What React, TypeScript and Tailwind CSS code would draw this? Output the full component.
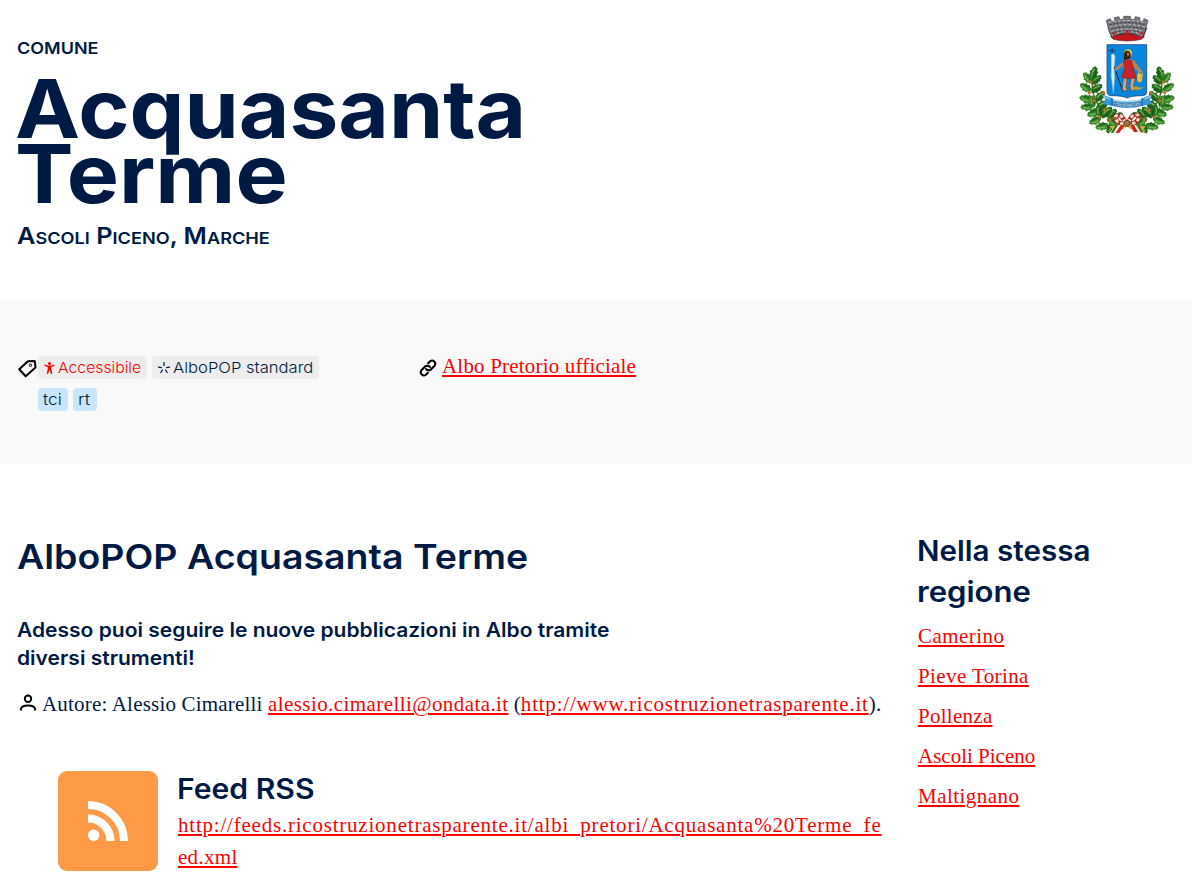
import React from "react";

const links: [string, string][] = [
  ["Camerino", "tracking-[0.44px]"],
  ["Pieve Torina", "tracking-[0.4px]"],
  ["Pollenza", "tracking-[0.27px]"],
  ["Ascoli Piceno", "tracking-normal"],
  ["Maltignano", "tracking-[0.47px]"],
];

// x, y, rotation, scale of each leaf on the left branch; the right branch mirrors it
const leaves: [number, number, number, number][] = [
  [66, 196, 8, 1.15], [48, 210, -45, 1.1], [74, 216, 40, 1], [42, 238, -65, 1.1], [74, 242, 50, 1.1],
  [44, 272, -85, 1.2], [84, 266, 35, 1.1], [46, 296, -100, 1.1], [92, 292, 50, 1.2], [66, 313, -120, 1.2],
  [104, 314, 40, 1.2], [70, 337, -120, 1.1], [122, 318, 30, 1], [90, 354, -110, 1.1], [112, 360, -165, 0.9],
  [62, 280, -20, 1], [82, 310, -15, 1.1], [122, 342, -60, 1.1],
];

function Branch() {
  return (
    <g>
      <path d="M62 205Q48 290 140 350" fill="none" stroke="#6b4a1c" strokeWidth="4" />
      {leaves.map(([x, y, r, s], i) => (
        <g key={i} transform={`translate(${x} ${y}) rotate(${r}) scale(${s})`}>
          <path d="M0 18l-7-4-1-5-4-3 2-6-2-5 6-4 0-5 7-5 7 6-1 5 4 4-3 5 2 6-5 3-1 5Z" fill={i % 2 ? "#35872b" : "#246c22"} />
          <path d="M-5 7Q-6-2 0-12" fill="none" stroke="#74b54c" strokeWidth="3.5" />
          <path d="M2 12Q5 2 4-8" fill="none" stroke="#174c18" strokeWidth="2.5" />
        </g>
      ))}
      {[[56, 222], [52, 254], [66, 278], [94, 254], [82, 326], [114, 336], [98, 306]].map(([x, y], i) => (
        <circle key={i} cx={x} cy={y} r="4.5" fill="#c8752b" stroke="#9d5c24" strokeWidth="1" />
      ))}
    </g>
  );
}

function Crest() {
  return (
    <svg className="h-[132px] w-[110px] shrink-0" viewBox="0 0 330 396" role="img" aria-label="Stemma">
      <path d="M108 60Q166 46 226 60L214 90Q166 102 119 90Z" fill="#3f4147" />
      <path d="M116 86Q166 70 217 86L208 94Q166 104 124 94Z" fill="#c8141c" stroke="#4b2326" strokeWidth="2" />
      <path d="M103 37l12-5 4 9 10-3-2-9 14-3 3 9 11-2v-8h20v8l12 2 3-9 14 3-2 9 10 3 4-9 12 5-9 33-9 18Q166 62 119 87L111 70Z" fill="#74767d" stroke="#44464c" strokeWidth="2" />
      <path d="M110 44Q166 31 223 44M114 57Q166 43 219 57M118 70Q166 56 215 70M121 82Q140 73 155 71M178 71Q195 73 212 82" fill="none" stroke="#c3c4c9" strokeWidth="3" strokeDasharray="8 6" />
      <path d="M113 50Q166 37 220 50M117 63Q166 50 216 63M119 76Q166 60 214 76" fill="none" stroke="#303237" strokeWidth="3" strokeDasharray="6 5" />
      <path d="M162 68h8v10h-8zM122 73l6-2 2 9-6 2zM207 71l7 2-3 9-6-2z" fill="#d31c20" />
      <Branch />
      <g transform="translate(330 0) scale(-1 1)"><Branch /></g>
      <path d="M105 110H224V252Q224 262 212 263Q178 263 165 270Q153 263 118 263Q105 262 105 252Z" fill="#0786dc" stroke="#1d4a86" strokeWidth="2.5" />
      <path d="M120 120v20M110 128h20" stroke="#193b66" strokeWidth="3" />
      <path d="M118 140Q128 132 129 150L126 180 128 210 124 256 118 206Z" fill="#dfedf7" stroke="#9fbdd2" strokeWidth="1.5" />
      <path d="M127 178L153 251" stroke="#16242f" strokeWidth="3" />
      <circle cx="168" cy="136" r="12" fill="#d9c944" />
      <path d="M156 142q0-18 14-13 10 8 4 22-8 9-18 5" fill="#3a1c10" />
      <path d="M165 134q7-2 6 5t-5 6z" fill="#c08055" />
      <path d="M155 158Q171 150 187 158L208 186 204 196 183 177 178 190 158 190 153 174 130 190 127 183 149 165Z" fill="#b8805c" />
      <path d="M154 160L164 157 178 157Q184 177 185 187L194 212 178 210 160 214 149 206 158 183Z" fill="#c52527" stroke="#8c1c1d" strokeWidth="2" />
      <path d="M155 210l10 2-3 27 5 9h-16l1-18zM178 210l12 2-6 20 5 15h-13l-2-15z" fill="#d6a27c" stroke="#4f3b30" strokeWidth="1.5" />
      <path d="M198 206q0-18 8-18t5 18" fill="none" stroke="#e7bc33" strokeWidth="2" />
      <ellipse cx="203" cy="209" rx="8" ry="14" fill="#f2b936" />
      <path d="M176 240q15-9 28-1l10-4-5 8q-18 5-33-3" fill="#d09c31" />
      <path d="M88 259L120 270 126 275Q165 283 203 275L211 270 242 259 234 272 238 288 210 294Q166 306 121 294L93 288 100 274Z" fill="#3796d6" />
      <path d="M123 276Q165 286 208 276M94 265l20 8M237 265l-20 8" fill="none" stroke="#a5d3ef" strokeWidth="4" />
      <path d="M120 272v22M210 272v22" stroke="#1d5d9c" strokeWidth="3" />
      <path id="motto" d="M124 291Q166 301 208 291" fill="none" />
      <text fill="#e4f2fb" stroke="#164478" strokeWidth="0.6" fontSize="15" fontWeight="700" fontFamily="Liberation Serif, serif"><textPath href="#motto" textLength="81">SALVS INFIRMIS</textPath></text>
      <path d="M160 344Q146 312 131 325 130 347 158 348M169 344Q184 309 199 323 202 346 172 348" fill="none" stroke="#a9302b" strokeWidth="14" />
      <path d="M160 344Q146 312 131 325 130 347 158 348M169 344Q184 309 199 323 202 346 172 348" fill="none" stroke="#f0e0c0" strokeWidth="9" strokeDasharray="10 7" />
      <path d="M138 318q6-8 14 0M180 317q8-6 14 2" fill="none" stroke="#2a6b32" strokeWidth="4" />
      <path d="M157 348L138 354 112 354 122 364 112 372 138 372 165 356 190 372 220 374 213 364 222 354 194 355 174 348Z" fill="#e9a545" />
      <path d="M146 350l12 2-16 22-12 2zM176 352l9-2 13 21-12 2z" fill="#c7242a" />
      <path d="M138 353l8-2-14 22-9 2zM186 350l7 4 13 19-8-1z" fill="#f7f2df" />
      <path d="M130 354l6 0-12 20-8 2zM196 354l7 0 11 19-7 0z" fill="#2c6b33" />
      <circle cx="165" cy="346" r="9" fill="#9f744b" stroke="#5f4028" strokeWidth="3" />
    </svg>
  );
}

function A({ children, className = "" }: { children: React.ReactNode; className?: string }) {
  return <a href="#" className={`text-[#ff0000] underline decoration-2 underline-offset-[2px] ${className}`}>{children}</a>;
}

function Wide({ children, className }: { children: React.ReactNode; className: string }) {
  return <span className={`inline-block origin-left whitespace-nowrap ${className}`}>{children}</span>;
}

export default function App() {
  return (
    <div className="h-[885px] w-[1192px] overflow-hidden bg-white font-['Liberation_Serif',serif] text-[21px] leading-8 text-[#001a44]">
      <header className="flex h-[300px] justify-between pr-[10px] pl-[17px] font-['Inter',sans-serif]">
        <div className="pt-9">
          <p className="text-base leading-6 font-semibold"><Wide className="scale-x-[1.125]">COMUNE</Wide></p>
          <h1 className="mt-[17px] -ml-[2px] text-[81px] leading-[65px] font-bold">
            <Wide className="scale-x-[1.077]">Acquasanta</Wide><br />
            <Wide className="scale-x-[1.083]">Terme</Wide>
          </h1>
          <h3 className="mt-[13px] text-[23px] leading-8 font-semibold uppercase">
            <Wide className="scale-x-[1.1]">A<span className="text-[16.5px]">scoli</span> P<span className="text-[16.5px]">iceno</span>, M<span className="text-[16.5px]">arche</span></Wide>
          </h3>
        </div>
        <div className="pt-2"><Crest /></div>
      </header>
      <section className="flex h-[164px] bg-[#f9f9f9] pt-[50px] pl-[18px]">
        <div className="flex w-[401px]">
          <svg className="mt-[9px] h-[20px] w-[20px]" viewBox="0 0 20 20" fill="none" stroke="#000" strokeWidth="2"><path d="M1.2 10.2L10 2.2l6.8-.2.7 6.5-9.8 8.8z" strokeLinejoin="round" /><circle cx="12.5" cy="6.3" r="1.2" strokeWidth="1" /></svg>
          <div className="flex w-[310px] flex-wrap content-start gap-x-[5px] gap-y-[9px] pt-[6px] font-['Inter',sans-serif] text-[15px] leading-[23px] font-light">
            <span className="flex h-[23px] w-[109px] items-center rounded bg-[#ededed] pl-[6px] text-[#ff0000]">
              <svg className="mr-[3px] h-3 w-[11px]" viewBox="0 0 11 12" fill="#f00"><circle cx="5.5" cy="1.5" r="1.5" /><path d="M.7 2.6l3.3 1h3l3.3-1 .3 1.1L7.3 5v2.4l1 4.2-1.3.3L5.7 8.3h-.4L4 11.9l-1.3-.3 1-4.2V5L.4 3.7z" /></svg>
              <Wide className="scale-x-[1.05]">Accessibile</Wide>
            </span>
            <span className="flex h-[23px] w-[167px] items-center rounded bg-[#ededed] pl-[6px]">
              <svg className="mr-[3px] h-3 w-3" viewBox="0 0 12 12" stroke="#001a44" strokeWidth="1.2"><path d="M6 0v4M0 5.2l3.8.5M12 5.2l-3.8.5M4.7 7.7L2.5 11M7.3 7.7L9.5 11" /></svg>
              <Wide className="scale-x-[1.107]">AlboPOP standard</Wide>
            </span>
            <span className="h-[23px] w-[30px] rounded bg-[#c8e5fa] pl-[5px]"><Wide className="scale-x-[1.15]">tci</Wide></span>
            <span className="h-[23px] w-6 rounded bg-[#c8e5fa] pl-[5px]"><Wide className="scale-x-[1.2]">rt</Wide></span>
          </div>
        </div>
        <div className="flex">
          <svg className="mt-[9px] mr-[5px] h-[18px] w-[18px]" viewBox="0 0 24 24" fill="none" stroke="#000" strokeWidth="2.7" strokeLinecap="round"><path d="M9.5 13.5a4.2 4.2 0 0 0 6.3.4l4.9-4.9a4.2 4.2 0 0 0-5.9-5.9l-2.6 2.6M14.5 10.5a4.2 4.2 0 0 0-6.3-.4L3.3 15a4.2 4.2 0 0 0 5.9 5.9l2.6-2.6" /></svg>
          <A className="tracking-[0.19px]">Albo Pretorio ufficiale</A>
        </div>
      </section>
      <main className="flex pl-[17px]">
        <div className="w-[901px] pt-[69px]">
          <h2 className="font-['Inter',sans-serif] text-[34px] leading-[48px] font-semibold"><Wide className="scale-x-[1.103]">AlboPOP Acquasanta Terme</Wide></h2>
          <h4 className="mt-[35px] font-['Inter',sans-serif] text-[19.5px] leading-7 font-semibold">
            <Wide className="scale-x-[1.078]">Adesso puoi seguire le nuove pubblicazioni in Albo tramite<br />diversi strumenti!</Wide>
          </h4>
          <p className="mt-4 flex whitespace-pre">
            <svg className="mt-[6px] mr-[5px] ml-[2px] h-[18px] w-[18px]" viewBox="0 0 18 18" fill="none" stroke="#000" strokeWidth="2"><circle cx="9" cy="4.7" r="3.2" /><path d="M2 16.5v-1.3Q2 11.5 9 11.5t7 3.7v1.3" /></svg>
            <span className="tracking-[0.19px]">Autore: Alessio Cimarelli </span>
            <A className="tracking-[0.42px]">alessio.cimarelli@ondata.it</A>
            <span> (</span>
            <A className="tracking-[0.78px]">http://www.ricostruzionetrasparente.it</A>
            <span className="tracking-[0.2px]">).</span>
          </p>
          <div className="mt-[51px] flex pl-[41px]">
            <div className="flex h-[100px] w-[100px] items-center justify-center rounded-[9px] bg-[#ff9a47]">
              <svg className="h-10 w-10" viewBox="0 0 40 40" fill="none" stroke="#fff" strokeWidth="8"><circle cx="5.7" cy="34.3" r="5.7" fill="#fff" stroke="none" /><path d="M0 17.5A22.5 22.5 0 0 1 22.5 40M0 4A36 36 0 0 1 36 40" /></svg>
            </div>
            <div className="ml-5">
              <h3 className="mb-[2px] -ml-px font-['Inter',sans-serif] text-[28px] leading-9 font-semibold"><Wide className="scale-x-[1.075]">Feed RSS</Wide></h3>
              <A>
                <span className="tracking-[0.785px]">http://feeds.ricostruzionetrasparente.it/albi_pretori/Acquasanta%20Terme_fe</span><br />
                <span className="tracking-[0.3px]">ed.xml</span>
              </A>
            </div>
          </div>
        </div>
        <aside className="pt-[67px]">
          <h3 className="-ml-px font-['Inter',sans-serif] text-[28px] leading-[41px] font-semibold">
            <Wide className="scale-x-[1.058]">Nella stessa</Wide><br />
            <Wide className="scale-x-[1.11]">regione</Wide>
          </h3>
          <ul className="mt-[7px] flex flex-col gap-2">{links.map(([l, t]) => <li key={l}><A className={t}>{l}</A></li>)}</ul>
        </aside>
      </main>
    </div>
  );
}
